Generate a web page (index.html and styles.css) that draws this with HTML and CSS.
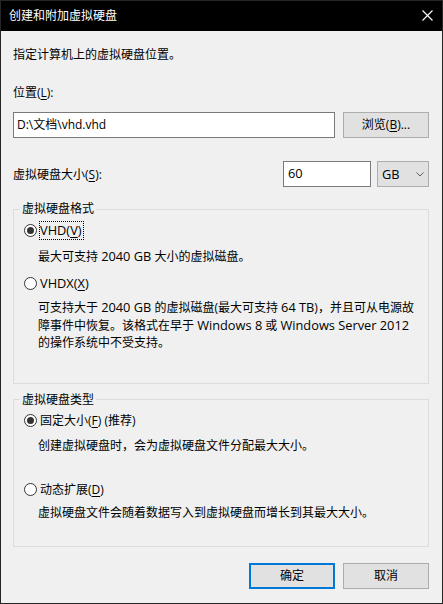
FILE: index.html
```html
<!DOCTYPE html>
<html lang="zh-CN">
<head>
<meta charset="utf-8">
<title>创建和附加虚拟硬盘</title>
<link rel="stylesheet" href="styles.css">
</head>
<body>
<div class="window">
  <div class="titlebar">
    <span class="title">创建和附加虚拟硬盘</span>
    <svg class="close" width="11" height="11" viewBox="0 0 11 11"><path d="M0.5 0.5 L10.5 10.5 M10.5 0.5 L0.5 10.5" stroke="#fff" stroke-width="1.1" fill="none"/></svg>
  </div>
  <div class="content">
    <p class="intro">指定计算机上的虚拟硬盘位置。</p>
    <p class="field-label">位置(<u>L</u>):</p>
    <div class="row path-row">
      <div class="textbox path">D:\文档\vhd.vhd</div>
      <div class="button">浏览(<u>B</u>)...</div>
    </div>
    <div class="row size-row">
      <span class="size-label">虚拟硬盘大小(<u>S</u>):</span>
      <div class="textbox size"><span class="en">60</span></div>
      <div class="combo"><span class="en">GB</span><svg width="8" height="5" viewBox="0 0 8 5"><path d="M0.5 0.5 L4 4 L7.5 0.5" stroke="#606060" stroke-width="1" fill="none"/></svg></div>
    </div>
    <fieldset class="group group-format">
      <legend>虚拟硬盘格式</legend>
      <div class="group-body">
        <div class="radio"><span class="circle checked"></span><span class="rlabel focused"><span class="en">VHD(<u>V</u>)</span></span></div>
        <p class="desc d1">最大可支持 <span class="en">2040 GB</span> 大小的虚拟磁盘。</p>
        <div class="radio r2"><span class="circle"></span><span class="rlabel"><span class="en">VHDX(<u>X</u>)</span></span></div>
        <p class="desc long">可支持大于 <span class="en">2040 GB</span> 的虚拟磁盘(最大可支持 <span class="en">64 TB</span>)，并且可从电源故<wbr>障事件中恢复。该格式在早于 <span class="en">Windows 8</span> 或 <span class="en">Windows Server 2012 </span><wbr>的操作系统中不受支持。</p>
      </div>
    </fieldset>
    <fieldset class="group group-type">
      <legend>虚拟硬盘类型</legend>
      <div class="group-body">
        <div class="radio"><span class="circle checked"></span><span class="rlabel">固定大小(<u>F</u>) (推荐)</span></div>
        <p class="desc d1">创建虚拟硬盘时，会为虚拟硬盘文件分配最大大小。</p>
        <div class="radio r3"><span class="circle"></span><span class="rlabel">动态扩展(<u>D</u>)</span></div>
        <p class="desc d2">虚拟硬盘文件会随着数据写入到虚拟硬盘而增长到其最大大小。</p>
      </div>
    </fieldset>
    <div class="buttons">
      <div class="button default">确定</div>
      <div class="button">取消</div>
    </div>
  </div>
</div>
</body>
</html>
```
FILE: styles.css
```css
* { box-sizing: border-box; }
html, body { margin: 0; padding: 0; }
body {
  width: 443px;
  height: 604px;
  background: #f0f0f0;
  font-family: "Open Sans", "Noto Sans CJK SC", sans-serif;
  font-size: 12px;
  color: #000;
}
u { text-decoration: underline; text-underline-offset: 2px; }
p { margin: 0; }
.en { font-size: 12.8px; }
.window {
  width: 443px;
  height: 604px;
  border: 1px solid #262626;
  background: #f0f0f0;
  display: flex;
  flex-direction: column;
}
.titlebar {
  height: 30px;
  background: #000;
  color: #fff;
  display: flex;
  align-items: center;
  justify-content: space-between;
  padding: 0 9px 1px 8px;
  flex: none;
}
.title { line-height: 18px; }
.close { display: block; }
.content {
  padding: 0 13px 0 12px;
  display: flex;
  flex-direction: column;
}
.intro { margin-top: 15px; line-height: 18px; }
.field-label { margin-top: 20px; line-height: 18px; }
.row { display: flex; align-items: center; height: 26px; }
.path-row { margin-top: 10px; gap: 8px; }
.size-row { margin-top: 23px; }
.textbox {
  height: 26px;
  background: #fff;
  border: 1px solid #7a7a7a;
  padding-left: 3px;
  line-height: 23px;
}
.path { width: 322px; }
.size-label { flex: 1; }
.size { width: 88px; padding-left: 4px; }
.combo {
  width: 52px;
  height: 26px;
  margin-left: 6px;
  background: #e1e1e1;
  border: 1px solid #adadad;
  display: flex;
  align-items: center;
  justify-content: space-between;
  padding: 0 4px 0 4px;
}
.combo svg { display: block; }
.button {
  width: 86px;
  height: 26px;
  background: #e1e1e1;
  border: 1px solid #adadad;
  display: flex;
  align-items: center;
  justify-content: center;
  line-height: 18px;
}
.button.default { border: 2px solid #0078d7; }
.group {
  margin: 0;
  padding: 0;
  border: 1px solid #dcdcdc;
  min-width: 0;
}
.group legend {
  margin-left: 6px;
  padding: 0 2px;
  line-height: 18px;
}
.group-format { margin-top: 13px; }
.group-type { margin-top: 7px; }
.group-body { padding: 3px 0 31px 10px; }
.group-type .group-body { padding: 2px 0 24px 10px; }
.radio { display: flex; align-items: center; height: 19px; }
.circle {
  width: 13px;
  height: 13px;
  border: 1px solid #333;
  border-radius: 50%;
  background: #fff;
  display: flex;
  align-items: center;
  justify-content: center;
  flex: none;
}
.circle.checked::after {
  content: "";
  width: 7px;
  height: 7px;
  border-radius: 50%;
  background: #333;
}
.rlabel {
  margin-left: 2px;
  border: 1px dotted transparent;
  padding-right: 1px;
  line-height: 17px;
}
.rlabel.focused { border-color: #000; }
.desc { padding-left: 14px; line-height: 18px; }
.d1 { margin-top: 7px; }
.r2 { margin-top: 8px; }
.long { margin-top: 6px; line-height: 17.5px; padding-right: 9px; }
.r3 { margin-top: 25px; }
.d2 { margin-top: 5px; }
.buttons {
  margin-top: 16px;
  display: flex;
  justify-content: flex-end;
  gap: 8px;
}
```
